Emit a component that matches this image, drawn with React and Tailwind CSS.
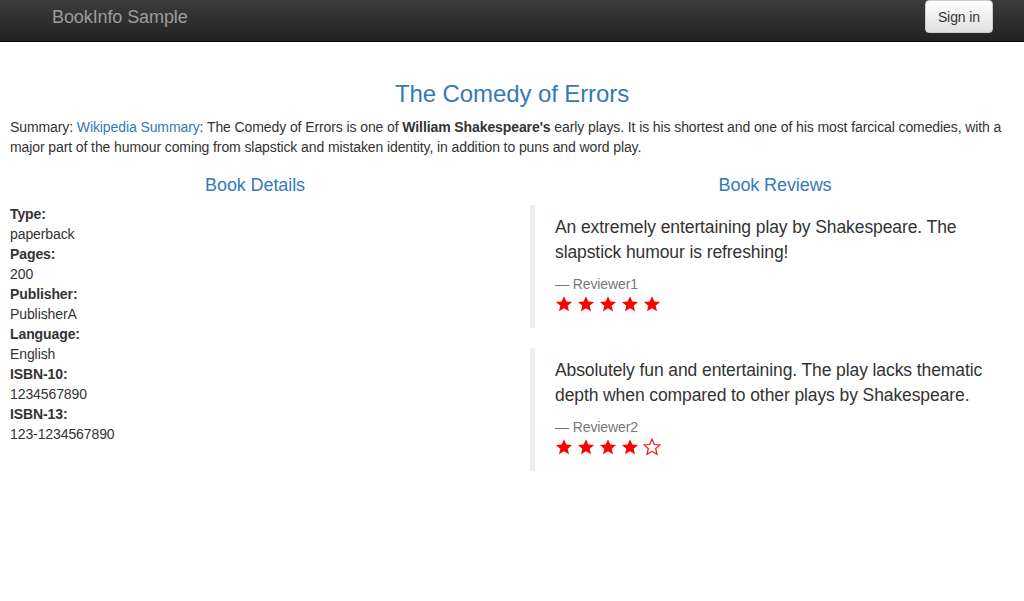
import React from 'react'

const details = [
  ['Type:', 'paperback'],
  ['Pages:', '200'],
  ['Publisher:', 'PublisherA'],
  ['Language:', 'English'],
  ['ISBN-10:', '1234567890'],
  ['ISBN-13:', '123-1234567890'],
]

const reviews = [
  {
    text: 'An extremely entertaining play by Shakespeare. The slapstick humour is refreshing!',
    reviewer: 'Reviewer1',
    stars: 5,
  },
  {
    text: 'Absolutely fun and entertaining. The play lacks thematic depth when compared to other plays by Shakespeare.',
    reviewer: 'Reviewer2',
    stars: 4,
  },
]

function Star({ filled }) {
  return (
    <svg width="18" height="18" viewBox="0 0 24 24">
      <polygon
        points="12,1.5 15.1,8.6 22.8,9.2 16.9,14.2 18.7,21.8 12,17.8 5.3,21.8 7.1,14.2 1.2,9.2 8.9,8.6"
        fill={filled ? '#ff0000' : 'none'}
        stroke="#ff0000"
        strokeWidth={filled ? 0 : 1.5}
        strokeLinejoin="miter"
      />
    </svg>
  )
}

export default function App() {
  return (
    <div className="min-h-[601px] bg-white text-[14px] leading-[20px] tracking-[-0.007em] text-[#333]" style={{ fontFamily: '"Liberation Sans", Arial, sans-serif' }}>
      <nav className="flex h-[42px] items-start justify-between border-b border-[#080808] bg-gradient-to-b from-[#3c3c3c] to-[#222]">
        <a className="mt-[7px] ml-[52px] text-[18px] leading-[20px] text-[#9d9d9d]">BookInfo Sample</a>
        <button className="mr-[31px] h-[33px] rounded-[4px] border border-[#ccc] bg-gradient-to-b from-white to-[#e0e0e0] px-[12px] text-[14px] text-[#333]">
          Sign in
        </button>
      </nav>

      <div className="px-[10px]">
        <h3 className="mt-[39px] mb-[10px] text-center text-[24px] leading-[26.4px] text-[#337ab7]">The Comedy of Errors</h3>
        <p className="mb-[10px]">
          Summary: <a className="text-[#337ab7]">Wikipedia Summary</a>: The Comedy of Errors is one of <b>William Shakespeare's</b> early plays. It is his shortest and one of his most farcical comedies, with a major part of the humour coming from slapstick and mistaken identity, in addition to puns and word play.
        </p>

        <div className="grid w-[1010px] grid-cols-2 gap-x-[30px]">
          <div>
            <h4 className="mt-[9px] mb-[8px] text-center text-[18px] leading-[19.8px] text-[#337ab7]">Book Details</h4>
            <dl>
              {details.map(([k, v]) => (
                <div key={k}>
                  <dt className="font-bold">{k}</dt>
                  <dd>{v}</dd>
                </div>
              ))}
            </dl>
          </div>
          <div>
            <h4 className="mt-[9px] mb-[9px] text-center text-[18px] leading-[19.8px] text-[#337ab7]">Book Reviews</h4>
            {reviews.map((r) => (
              <blockquote key={r.reviewer} className="mb-[20px] border-l-[5px] border-[#eee] px-[20px] py-[10px] text-[17.5px] leading-[25px]">
                <p className="mb-[9px]">{r.text}</p>
                <small className="block text-[14px] leading-[20px] text-[#777]">— {r.reviewer}</small>
                <div className="flex h-[24px] items-start gap-[4px] pt-[1px]">
                  {[0, 1, 2, 3, 4].map((i) => (
                    <Star key={i} filled={i < r.stars} />
                  ))}
                </div>
              </blockquote>
            ))}
          </div>
        </div>
      </div>
    </div>
  )
}
